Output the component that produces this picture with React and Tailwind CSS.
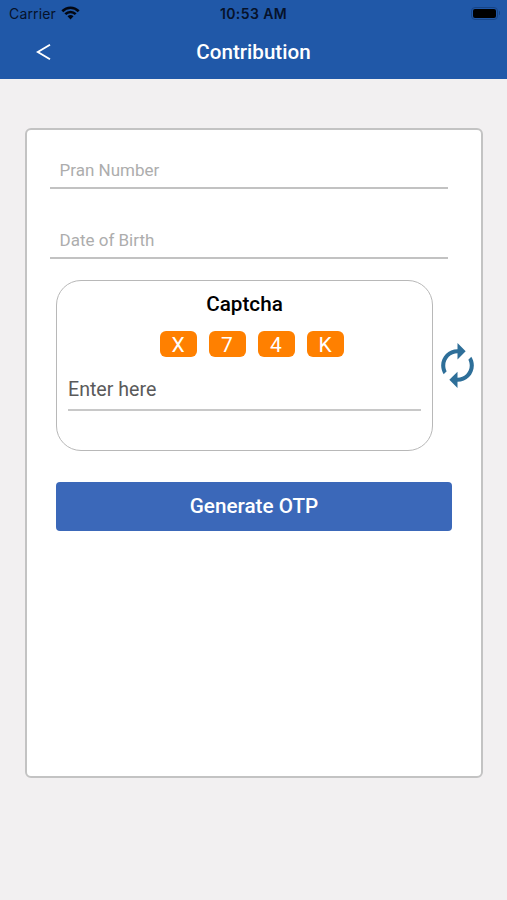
import React from "react";

const captcha = ["X", "7", "4", "K"];

function StatusBar() {
  return (
    <div className="relative flex h-[26px] items-center justify-between pr-[7px] pl-[9px] text-[#06122a]">
      <div className="flex items-center gap-[5px] pt-[2px]">
        <span className="font-[Inter,sans-serif] text-[14px] leading-4 tracking-[0.15px]">Carrier</span>
        <svg className="-mt-[2px]" width="19" height="14" viewBox="0 0 19 14" fill="none" stroke="#030712" strokeWidth="2.6">
          <path d="M1.3 5.2C6 .6 13 .6 17.7 5.2" />
          <path d="M4.3 8.2C7.3 5.2 11.7 5.2 14.7 8.2" />
          <path d="M6.5 10.3C8.2 8.7 10.8 8.7 12.5 10.3L9.5 13.5Z" fill="#030712" stroke="none" />
        </svg>
      </div>
      <span className="absolute inset-x-0 top-[6px] text-center font-[Inter,sans-serif] text-[14px] leading-4 font-semibold tracking-[0.4px]">
        10:53 AM
      </span>
      <div className="flex items-center gap-px">
        <div className="h-[13px] w-[27px] rounded-[4px] border border-[#174486] p-px">
          <div className="h-full rounded-[2px] bg-black" />
        </div>
        <div className="h-1 w-[1.5px] rounded-r bg-[#174486]" />
      </div>
    </div>
  );
}

function Header() {
  return (
    <header className="h-[79px] bg-[#2058a8]">
      <StatusBar />
      <div className="grid h-[51px] grid-cols-[1fr_auto_1fr] items-center">
        <svg className="ml-[36px]" width="15" height="18" viewBox="0 0 15 18" fill="none" stroke="white" strokeWidth="1.9">
          <path d="M14 1.8L1.8 9L14 16.2" />
        </svg>
        <h1 className="text-[20.6px] leading-6 font-medium text-white">Contribution</h1>
      </div>
    </header>
  );
}

function Field({ label }) {
  return (
    <div className="h-[42px] w-[398px] border-b-2 border-[#c2c2c2] pt-[13px] pl-[9.5px] text-[17px] leading-[20px] text-[#adadad]">
      {label}
    </div>
  );
}

export default function App() {
  return (
    <div className="h-[900px] w-[507px] overflow-hidden bg-[#f2f0f1] font-[Roboto,sans-serif]">
      <Header />
      <main className="mt-[49px] ml-[25px] h-[650px] w-[458px] rounded-[6px] border-2 border-[#c3c3c3] bg-white pt-[17px] pl-[23px]">
        <div className="flex flex-col gap-7">
          <Field label="Pran Number" />
          <Field label="Date of Birth" />
        </div>
        <div className="mt-[21px] ml-[6px] flex items-center">
          <section className="h-[171px] w-[378px] rounded-[25px] border-[1.5px] border-[#b8b8b8] px-[11px] pt-[11px]">
            <h2 className="text-center text-[20.7px] leading-6 font-medium text-black">Captcha</h2>
            <div className="mt-[15px] flex justify-center gap-3 pl-[14px]">
              {captcha.map((c) => (
                <span key={c} className="flex h-[26px] w-[37px] items-center justify-center rounded-[6px] bg-[#ff8000] pt-[2px] text-[21px] leading-6 text-white">
                  {c}
                </span>
              ))}
            </div>
            <div className="mt-[16px] h-[38px] w-[353px] border-b-2 border-[#c8c8c8] pt-[5px] text-[19.6px] leading-6 text-[#5a5a5a]">
              Enter here
            </div>
          </section>
          <svg className="shrink-0" width="49" height="49" viewBox="0 0 24 24" fill="#2e6f99">
            <path d="M12 6v3l4-4-4-4v3c-4.42 0-8 3.58-8 8 0 1.57.46 3.03 1.24 4.26L6.7 14.8c-.45-.83-.7-1.79-.7-2.8 0-3.31 2.69-6 6-6zm6.76 1.74L17.3 9.2c.44.84.7 1.79.7 2.8 0 3.31-2.69 6-6 6v-3l-4 4 4 4v-3c4.42 0 8-3.58 8-8 0-1.57-.46-3.03-1.24-4.26z" />
          </svg>
        </div>
        <button className="mt-[31px] ml-[6px] h-[49px] w-[396px] rounded-[4px] bg-[#3b68b9] text-[20.7px] font-medium text-white">
          Generate OTP
        </button>
      </main>
    </div>
  );
}
